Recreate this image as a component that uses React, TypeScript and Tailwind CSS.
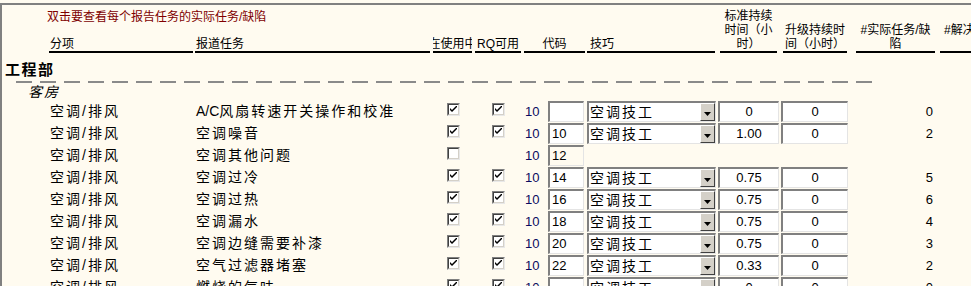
import React from "react";

type Row = {
  cat: string;
  task: string;
  cb1: boolean;
  cb2: boolean | null;
  code: string;
  select: boolean;
  std: string | null;
  up: string | null;
  count: string | null;
  disabled?: boolean;
};

const rows: Row[] = [
  { cat: "空调/排风", task: "A/C风扇转速开关操作和校准", cb1: true, cb2: true, code: "", select: true, std: "0", up: "0", count: "0" },
  { cat: "空调/排风", task: "空调噪音", cb1: true, cb2: true, code: "10", select: true, std: "1.00", up: "0", count: "2" },
  { cat: "空调/排风", task: "空调其他问题", cb1: false, cb2: null, code: "12", select: false, std: null, up: null, count: null, disabled: true },
  { cat: "空调/排风", task: "空调过冷", cb1: true, cb2: true, code: "14", select: true, std: "0.75", up: "0", count: "5" },
  { cat: "空调/排风", task: "空调过热", cb1: true, cb2: true, code: "16", select: true, std: "0.75", up: "0", count: "6" },
  { cat: "空调/排风", task: "空调漏水", cb1: true, cb2: true, code: "18", select: true, std: "0.75", up: "0", count: "4" },
  { cat: "空调/排风", task: "空调边缝需要补漆", cb1: true, cb2: true, code: "20", select: true, std: "0.75", up: "0", count: "3" },
  { cat: "空调/排风", task: "空气过滤器堵塞", cb1: true, cb2: true, code: "22", select: true, std: "0.33", up: "0", count: "2" },
  { cat: "空调/排风", task: "燃烧的气味", cb1: true, cb2: true, code: "", select: true, std: "0", up: "0", count: "0" },
];

function Spaced({ text }: { text: string }) {
  const parts = text.split(/([\x00-\x7F]+)/).filter((p) => p.length > 0);
  return (
    <>
      {parts.map((p, i) =>
        /^[\x00-\x7F]+$/.test(p) ? (
          <span key={i} className="tracking-normal">
            {p}
          </span>
        ) : (
          <span key={i}>{p}</span>
        )
      )}
    </>
  );
}

function Checkbox({ checked }: { checked: boolean }) {
  return (
    <div className="w-[13px] h-[13px] border-t border-l border-[#808080] border-r border-b border-r-[#e8e8e8] border-b-[#e8e8e8] bg-white flex items-center justify-center">
      <div className="w-[11px] h-[11px] border-t border-l border-[#404040] border-r border-b border-r-[#d4d0c8] border-b-[#d4d0c8] flex items-center justify-center">
        {checked && (
          <svg width="7" height="7" viewBox="0 0 7 7">
            <path d="M0 2 L0 4 L2 6 L7 1 L7 -1 L2 4 Z" fill="#000" />
          </svg>
        )}
      </div>
    </div>
  );
}

const box =
  "h-[21px] shrink-0 border-t-2 border-l-2 border-[#808080] border-r border-b border-r-[#e4e4e4] border-b-[#e4e4e4]";

export default function App() {
  return (
    <div className="w-[971px] h-[286px] overflow-hidden bg-[#fffbf0] pt-[3px] font-['Liberation_Sans','Noto_Sans_CJK_SC',sans-serif] text-black">
      <div className="h-full border-t-2 border-l-2 border-[#808080] overflow-hidden">
        {/* Header */}
        <div className="flex items-end h-[48px] text-[12px] leading-[14px]">
          <div className="flex flex-col justify-between h-full shrink-0">
            <div className="pl-[45px] pt-[5px] text-[#800000] whitespace-nowrap">双击要查看每个报告任务的实际任务/缺陷</div>
            <div className="flex">
              <div className="ml-[47px] w-[144px] shrink-0 border-b-2 border-black pl-[1px]">分项</div>
              <div className="ml-[2px] w-[235px] shrink-0 border-b-2 border-black pl-[1px]">报道任务</div>
            </div>
          </div>
          <div className="ml-[3px] w-[39px] shrink-0 border-b-2 border-black overflow-hidden flex justify-center whitespace-nowrap">在使用中</div>
          <div className="ml-[3px] w-[46px] shrink-0 border-b-2 border-black pl-[2px] whitespace-nowrap">RQ可用</div>
          <div className="ml-[3px] w-[61px] shrink-0 border-b-2 border-black text-center">代码</div>
          <div className="ml-[2px] w-[128px] shrink-0 border-b-2 border-black pl-[3px]">技巧</div>
          <div className="ml-[5px] w-[57px] shrink-0 border-b-2 border-black text-center">标准持续时间（小时）</div>
          <div className="ml-[6px] w-[64px] shrink-0 border-b-2 border-black text-center">升级持续时间（小时）</div>
          <div className="ml-[9px] w-[79px] shrink-0 border-b-2 border-black text-center">#实际任务/缺陷</div>
          <div className="ml-[5px] w-[90px] shrink-0 border-b-2 border-black text-center">#解决的任务/缺陷</div>
        </div>

        {/* Section */}
        <div className="pl-[3px] pt-[8px] h-[26px] text-[15px] font-bold leading-[18px] tracking-[1.5px]">工程部</div>
        <div className="ml-[14px] mt-[2px] w-[856px] h-[2px] bg-[repeating-linear-gradient(to_right,#8a8a8a_0px,#8a8a8a_16px,transparent_16px,transparent_24px)]" />
        <div className="pl-[26px] h-[18px] leading-[18px] text-[14px] italic tracking-[2px]">客房</div>

        {/* Rows */}
        {rows.map((r, i) => (
          <div key={i} className="flex items-start h-[22px] pl-[48px]">
            <div className="w-[146px] shrink-0 text-[14px] tracking-[2px] leading-[21px] whitespace-nowrap">{r.cat}</div>
            <div className="w-[251px] shrink-0 text-[14px] tracking-[2px] leading-[21px] whitespace-nowrap">
              <Spaced text={r.task} />
            </div>
            <div className="w-[45px] shrink-0 pt-[2px]">
              <Checkbox checked={r.cb1} />
            </div>
            <div className="w-[33px] shrink-0 pt-[2px]">{r.cb2 !== null && <Checkbox checked={r.cb2} />}</div>
            <div className="w-[23px] shrink-0 text-[13px] leading-[21px] text-[#0a0a60]">10</div>
            <div className={`w-[36px] ${box} ${r.disabled ? "" : "bg-white"} text-[13px] leading-[18px] pl-[2px]`}>{r.code}</div>
            {r.select && (
              <>
                <div className={`ml-[3px] w-[129px] ${box} bg-white flex`}>
                  <div className="flex-1 pl-[1px] text-[14px] tracking-[2px] leading-[18px] whitespace-nowrap overflow-hidden">空调技工</div>
                  <div className="w-[15px] h-[18px] shrink-0 bg-[#d4d0c8] border-t border-l border-white border-r border-b border-r-[#404040] border-b-[#404040] flex items-center justify-center">
                    <svg width="7" height="4" viewBox="0 0 7 4" className="mt-[4px]">
                      <path d="M0 0 L7 0 L3.5 4 Z" fill="#000" />
                    </svg>
                  </div>
                </div>
                <div className={`ml-[2px] w-[61px] ${box} bg-white text-center text-[13px] leading-[18px]`}>{r.std}</div>
                <div className={`ml-[2px] w-[67px] ${box} bg-white text-center text-[13px] leading-[18px]`}>{r.up}</div>
                <div className="w-[87px] shrink-0 text-right pr-[2px] text-[13px] leading-[21px]">{r.count}</div>
              </>
            )}
          </div>
        ))}
      </div>
    </div>
  );
}
